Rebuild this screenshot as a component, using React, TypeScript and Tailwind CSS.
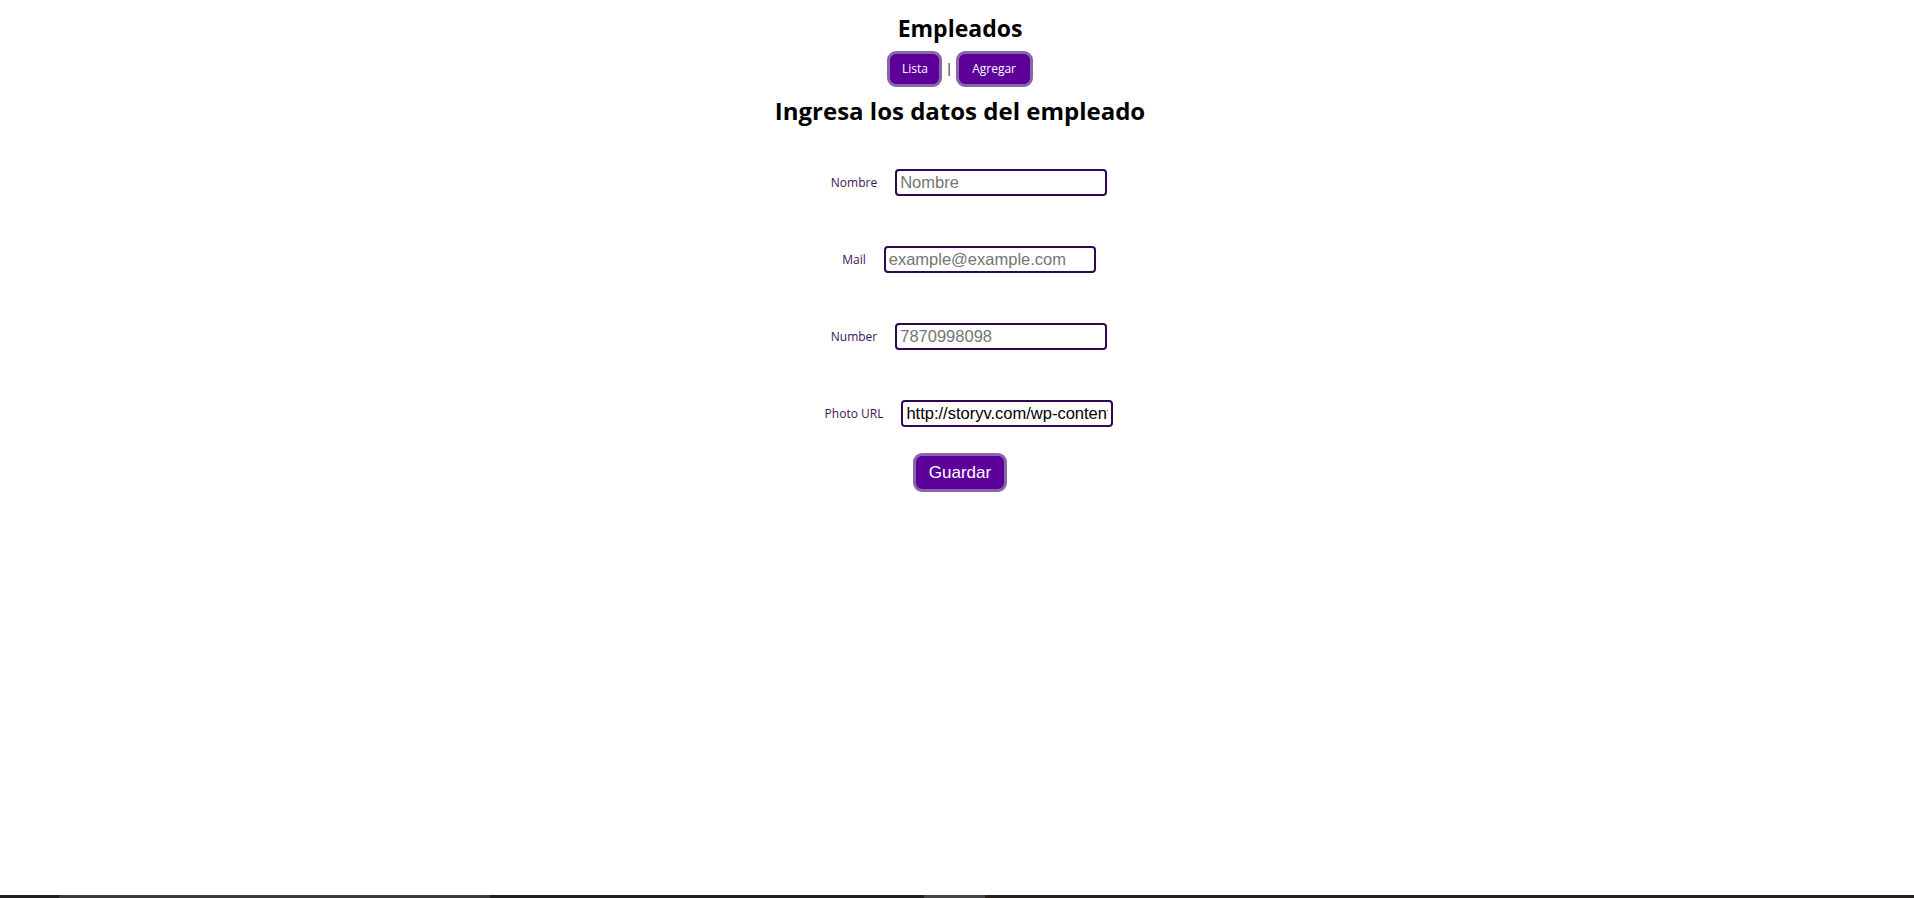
import React, { useState } from 'react';

const ui = '"Segoe UI", "Open Sans", "Noto Sans", sans-serif';
const arial = '"Liberation Sans", Arial, sans-serif';

function Field({ label, placeholder, value, type = 'text' }: { label: string; placeholder: string; value?: string; type?: string }) {
  const [v, setV] = useState(value ?? '');
  return (
    <div className="flex items-center pl-[18px]">
      <label className="text-[12px] text-[#3a1556] mr-[18px]" style={{ fontFamily: ui }}>
        {label}
      </label>
      <input
        type={type}
        value={v}
        onChange={(e) => setV(e.target.value)}
        placeholder={placeholder}
        className="w-[212px] h-[27px] px-[3px] border-2 border-[#2f0850] rounded-[4px] text-[16.5px] text-black placeholder:text-[#757575] outline-none bg-white"
        style={{ fontFamily: arial }}
      />
    </div>
  );
}

export default function App() {
  return (
    <div className="min-h-screen flex flex-col bg-white">
      <div className="flex-1 flex flex-col items-center pl-[6px]">
        {/* encabezado */}
        <h1 className="mt-[14px] text-[23px] font-bold leading-[29px] text-black" style={{ fontFamily: ui }}>
          Empleados
        </h1>
        <nav className="flex items-center gap-[3px] mt-[8px]" style={{ fontFamily: ui }}>
          <button className="w-[55px] h-[36px] rounded-[9px] border-[3px] border-[#8a66a6] bg-[#5c0099] text-white text-[12px]">
            Lista
          </button>
          <span className="text-[13px] text-black">|</span>
          <button className="w-[77px] h-[36px] rounded-[9px] border-[3px] border-[#8a66a6] bg-[#5c0099] text-white text-[12px]">
            Agregar
          </button>
        </nav>
        <h2 className="mt-[8px] text-[24px] font-bold leading-[32px] text-black" style={{ fontFamily: ui }}>
          Ingresa los datos del empleado
        </h2>

        {/* formulario */}
        <form className="flex flex-col items-center mt-[42px] gap-[50px]" onSubmit={(e) => e.preventDefault()}>
          <Field label="Nombre" placeholder="Nombre" />
          <Field label="Mail" placeholder="example@example.com" type="email" />
          <Field label="Number" placeholder="7870998098" />
          <Field label="Photo URL" placeholder="" value="http://storyv.com/wp-content/uploads/photo.jpg" />
        </form>
        <button
          className="mt-[26px] w-[94px] h-[39px] rounded-[9px] border-[3px] border-[#8a66a6] bg-[#5c0099] text-white text-[17px]"
          style={{ fontFamily: arial }}
        >
          Guardar
        </button>
      </div>

      {/* barra inferior */}
      <div className="h-[3px] flex">
        <div className="w-[59px] bg-[#1e1e1e]" />
        <div className="w-[431px] bg-[#3a3a3a]" />
        <div className="w-[434px] bg-[#1f1f1f]" />
        <div className="w-[61px] bg-[#454545]" />
        <div className="flex-1 bg-[#27211e]" />
      </div>
    </div>
  );
}
